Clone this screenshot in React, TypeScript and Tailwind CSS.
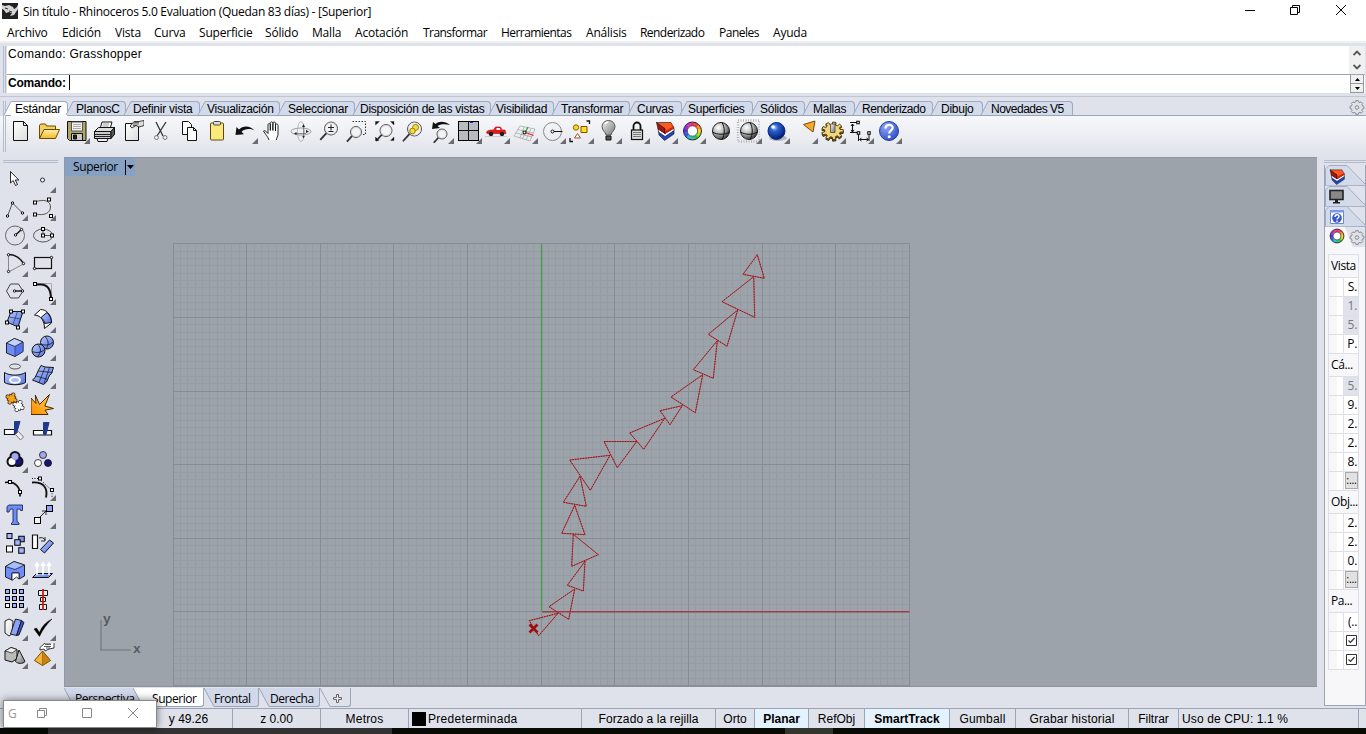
import React from "react";

type P = { children?: React.ReactNode };
const K = "#111";

/* ---------- icon helpers ---------- */
const Ico = ({ children }: P) => (
  <svg width="24" height="24" viewBox="0 0 24 24" fill="none" stroke={K} strokeWidth="1" className="block shrink-0">
    {children}
  </svg>
);
const Sq = ({ x, y, s = 3, f = "#fff" }: { x: number; y: number; s?: number; f?: string }) => (
  <rect x={x - s / 2} y={y - s / 2} width={s} height={s} fill={f} stroke="#000" />
);
const Corner = () => (
  <svg width="6" height="6" viewBox="0 0 6 6" className="absolute bottom-0 right-0 block">
    <path d="M6 0v6H0z" fill="#6b6b70" />
  </svg>
);

const Defs = () => (
  <svg width="0" height="0" className="absolute">
    <defs>
      <linearGradient id="fold" x1="0" y1="0" x2="0" y2="1"><stop offset="0" stopColor="#fff2a8" /><stop offset="1" stopColor="#f2b82c" /></linearGradient>
      <linearGradient id="page" x1="0" y1="0" x2="1" y2="1"><stop offset="0" stopColor="#fff" /><stop offset="1" stopColor="#dcdcdc" /></linearGradient>
      <linearGradient id="blue" x1="0" y1="0" x2="1" y2="1"><stop offset="0" stopColor="#b9c8ff" /><stop offset="1" stopColor="#4f73e6" /></linearGradient>
      <linearGradient id="org" x1="0" y1="1" x2="1" y2="0"><stop offset="0" stopColor="#ff8a00" /><stop offset="1" stopColor="#ffd84a" /></linearGradient>
      <linearGradient id="gray" x1="0" y1="0" x2="1" y2="1"><stop offset="0" stopColor="#f2f2f2" /><stop offset="1" stopColor="#777" /></linearGradient>
      <radialGradient id="ballg" cx=".35" cy=".3" r=".75"><stop offset="0" stopColor="#fff" /><stop offset=".5" stopColor="#b5b5b5" /><stop offset="1" stopColor="#333" /></radialGradient>
      <radialGradient id="ballb" cx=".38" cy=".3" r=".7"><stop offset="0" stopColor="#b8d4ff" /><stop offset=".3" stopColor="#2b63d8" /><stop offset="1" stopColor="#041a6b" /></radialGradient>
      <radialGradient id="ballh" cx=".35" cy=".3" r=".8"><stop offset="0" stopColor="#8ea8f5" /><stop offset="1" stopColor="#2846c4" /></radialGradient>
    </defs>
  </svg>
);

const wheelColors = ["#ff3b30", "#ff8a1e", "#ffd91a", "#9be01e", "#2fc43a", "#1fc9a8", "#2ab4f0", "#2a5cf0", "#5a34e0", "#a02be0", "#e02bc0", "#f02b70"];
const Wheel = ({ cx = 12, cy = 12, r = 7 }: { cx?: number; cy?: number; r?: number }) => (
  <g>
    {wheelColors.map((c, i) => {
      const a = ((i * 30 - 75) * Math.PI) / 180;
      const b = ((i * 30 - 43) * Math.PI) / 180;
      return <path key={c} d={`M${cx + r * Math.cos(a)} ${cy + r * Math.sin(a)}A${r} ${r} 0 0 1 ${cx + r * Math.cos(b)} ${cy + r * Math.sin(b)}`} stroke={c} strokeWidth={r * 0.5} />;
    })}
    <circle cx={cx} cy={cy} r={r * 1.28} stroke="#222" strokeWidth="1" />
    <circle cx={cx} cy={cy} r={r * 0.74} stroke="#333" strokeWidth=".8" fill="#fff" />
  </g>
);
const cogPath = (cx: number, cy: number, rx: number, ry: number, inner: number, teeth: number) => {
  const pts: string[] = [];
  for (let i = 0; i < teeth; i++) {
    [[-0.3, inner], [-0.22, 1], [0.22, 1], [0.3, inner]].forEach(([o, k]) => {
      const a = ((i + o) / teeth) * Math.PI * 2;
      pts.push(`${(cx + rx * k * Math.cos(a)).toFixed(2)} ${(cy + ry * k * Math.sin(a)).toFixed(2)}`);
    });
  }
  return `M${pts.join("L")}Z`;
};
const Layers = () => (
  <g strokeWidth=".6">
    <path d="M5.500 12l6.500 5 9-6v4l-9.500 6.500L6 16z" fill="#2346c0" />
    <path d="M5 9.500l7 5 9-5.500v2.500L12 17.500l-6.500-4.500z" fill="#fff" />
    <path d="M3.500 3.500L12 9.500v5L5 10z" fill="#a8120a" />
    <path d="M3.500 3.500L18 3.500l3 5.500-9 5.500v-5z" fill="#ff5a1e" />
    <path d="M12 12l9-5v2l-9 5.500z" fill="#d9200c" stroke="none" />
  </g>
);
const Lens = ({ cx = 14, cy = 10, r = 6.5, f = "#f4f4f6" }: { cx?: number; cy?: number; r?: number; f?: string }) => (
  <g>
    <path d={`M${cx - r * 0.7} ${cy + r * 0.7}L${cx - r * 1.65} ${cy + r * 1.75}`} stroke="#333" strokeWidth="1.800" />
    <circle cx={cx} cy={cy} r={r} fill={f} stroke="#555" />
    <circle cx={cx} cy={cy} r={r - 1} stroke="#ccc" strokeWidth=".6" />
  </g>
);
const Sphere = () => (
  <g>
    <circle cx="12" cy="12" r="8.500" fill="url(#ballg)" stroke="#222" />
    <path d="M3.500 13c5 3 12 3 17 0M13 3.500c3 5 3 12 0 17" stroke="#111" />
  </g>
);
const Puzzle = ({ x, y, f }: { x: number; y: number; f: string }) => {
  const body = (
    <>
      <rect x="-3" y="-3" width="6" height="6" />
      <circle cx="0" cy="-4.200" r="1.500" /><circle cx="0" cy="4.200" r="1.500" />
      <circle cx="-4.200" cy="0" r="1.500" /><circle cx="4.200" cy="0" r="1.500" />
    </>
  );
  return (
    <g transform={`translate(${x} ${y}) rotate(25)`}>
      <g stroke="#222" strokeWidth="1.400">{body}</g>
      <g fill={f} stroke="none">{body}</g>
    </g>
  );
};

/* ---------- main toolbar ---------- */
const topIcons: [React.ReactNode, boolean][] = [
  [<path d="M5.500 2.500h10l4 4v15h-14zM15.500 2.500v4h4" fill="url(#page)" />, false],
  [<><path d="M3.500 19.500V6.500l1-1.500h5l1 2h9v3" fill="#f5d060" stroke="#6b4a00" /><path d="M3.500 19.500l4.500-9h15.500l-4 9z" fill="url(#fold)" stroke="#6b4a00" /></>, false],
  [<><path d="M3.500 2.500h18.500v19H5.500l-2-2z" fill="#b0a765" /><path d="M7.500 3h11v9h-11z" fill="#f2f2f0" stroke="#555" /><path d="M9 5.500h8M9 7.500h8M9 9.500h8" stroke="#aaa" /><path d="M7.500 14.500h11v7h-11z" fill="#ccc" /><path d="M9.500 16h3v4h-3z" fill="#222" /></>, true],
  [<><path d="M8 10l2-7h10l-2 7z" fill="#fff" /><path d="M11 5h6M10.500 7h6" stroke="#999" /><path d="M2.500 12.500l4-4h16l-3.500 4z" fill="#ddd" /><path d="M2.500 12.500H19v7H2.500z" fill="#ccc" /><path d="M19 12.500l3.500-4v7L19 19.500z" fill="#555" /><path d="M3 15.500h15.500M3 17.500h15.500" stroke="#222" /><path d="M5 19.500h11l-1 3H6z" fill="#eee" /></>, false],
  [<><path d="M5.500 4.500h13v17h-13z" fill="url(#page)" /><path d="M10 7l4-4.500h5l5-1v5l-5 1.500-3-1.500-4 2.500z" fill="#ddd" strokeWidth=".8" /><path d="M13 5h6M14 3.500h5M13 6.500h4" stroke="#333" strokeWidth=".7" /></>, false],
  [<><path d="M8 3l7 14M18 3L9 17" strokeWidth="1.300" stroke="#333" /><circle cx="8.500" cy="18.500" r="2" stroke="#777" /><circle cx="17" cy="18.500" r="2" stroke="#777" /></>, false],
  [<><path d="M6.500 2.500h6l3 3v10h-9z" fill="#fff" /><path d="M11.500 8.500h6l3 3v10h-9z" fill="#fff" /><path d="M17.500 8.500v3h3" /></>, false],
  [<><rect x="6.500" y="4" width="13" height="17" rx="1" fill="#fbe97b" stroke="#5b4a10" /><rect x="9.500" y="2.500" width="7" height="3.500" rx="1" fill="#ddd" stroke="#444" /></>, false],
  [<path d="M3.500 16l1-8 2.500 2.500C11 6.500 18 6.500 22.500 11.500 17.500 9 12.500 10 9.500 12.800l2.500 2.400z" fill="#111" stroke="none" />, true],
  [<path d="M9 21C8 17.500 5 15 3.500 12c1-1 2.800.3 4.500 2.500V6c0-2 2.300-2 2.300 0v5.500V4.500c0-2.200 2.600-2.200 2.600 0v7V4.500c0-2 2.600-2 2.600 0V12 6.500c0-2 2.500-2 2.500 0V15c0 2.500-1.500 3.500-1.700 6" fill="#fff" strokeWidth=".9" />, false],
  [<><ellipse cx="13" cy="12.500" rx="10" ry="3.500" stroke="#888" strokeWidth=".8" /><ellipse cx="13" cy="12.500" rx="3.500" ry="10" stroke="#aaa" strokeWidth=".8" /><path d="M15.500 6v11M7 14.500h11" stroke="#666" strokeWidth=".7" /><path d="M14 8l1.500-3L17 8zM14.300 17l1.200 2.500 1.200-2.500zM8.500 13L6 14.500 8.500 16zM18 11l3 1.500-3 1.500z" fill="#222" stroke="none" /></>, false],
  [<><Lens cx={15} cy={9.500} /><path d="M12 8.500h6M15 5.500v6M12.500 12.500h5" stroke="#222" /></>, false],
  [<><path d="M8.500 2.500h13v13h-4" stroke="#333" strokeDasharray="1.500 1.500" /><Lens cx={12} cy={13} r={5.5} /></>, false],
  [<><Lens cx={14} cy={11.500} r={6} /><path d="M3.500 6V2.500h4zM18.500 2.500H22v3.500zM22 18v3.500h-3.500zM3.500 18v3.500h3.500z" fill="#111" strokeWidth=".3" /></>, false],
  [<><Lens cx={14.500} cy={10} r={7} /><circle cx="15.500" cy="8.500" r="3" fill="#f6df3b" stroke="#9a7d00" /><circle cx="12.500" cy="12" r="2.800" fill="#f6df3b" stroke="#9a7d00" /></>, false],
  [<><Lens cx={14} cy={15} r={5} /><path d="M4 10l1-7 2.500 2C11 2 17 2 22 6 17 4.500 12 5 9.500 7l2.500 2z" fill="#111" stroke="none" /></>, true],
  [<><rect x="2.500" y="2.500" width="20" height="19" fill="#b9bbbf" stroke="#000" /><path d="M12.500 2.500v19M2.500 11.500h20" /><path d="M14 3.500h3" stroke="#22f" /></>, true],
  [<><path d="M2.500 13c1-2 5-2 7-2l2-3h5l1.500 3h3l1 3.500H3z" fill="#e51b1b" stroke="#b01010" strokeWidth=".6" /><path d="M12.500 9v2h4l-1-2z" fill="#fff" stroke="none" /><circle cx="7" cy="15" r="1.800" fill="#222" /><circle cx="18" cy="15" r="1.800" fill="#222" /><path d="M1 17.500h22" stroke="#ccc" /></>, true],
  [<g strokeWidth=".8"><path d="M8 7l15 3-5 12-16-5zM5.500 10.500l16 3.500M4 14l16 4M12 8L8 19M15.500 8.500l-5 11.500M19 9.500L14 21" stroke="#aaa" /><path d="M13.500 13.500l8 3" stroke="#e22" strokeWidth="1.300" /><path d="M13.500 13l2.500-5" stroke="#3a3" strokeWidth="1.300" /><Sq x={12.500} y={13.500} s={2.600} /></g>, true],
  [<><circle cx="12.500" cy="12.500" r="9" stroke="#888" /><path d="M12.500 12.500h10" /><circle cx="12.500" cy="12.500" r="1.500" fill="#fff" /></>, true],
  [<><path d="M18.500 2h3v3M2 19v3.500h3" strokeWidth="1.300" /><circle cx="8" cy="8.500" r="2.700" fill="#ffd21e" stroke="#8a6a00" /><path d="M13 7.500h6v6h-6z" fill="#ffe01e" stroke="#8a4a00" /><path d="M9.500 14.500l3 4.500h-6z" fill="#fff" stroke="#a0522d" /></>, true],
  [<><path d="M10 16c0-3-4-4-4-8.500a6.500 6 0 0 1 13 0C19 12 15 13 15 16z" fill="url(#gray)" stroke="#555" /><path d="M10 17h5v4h-5z" fill="#555" /><path d="M9 5c1-1.500 2-2 3-2" stroke="#fff" strokeWidth="1.500" /></>, true],
  [<><path d="M9.500 11V7a3.500 3.500 0 0 1 7 0v4" strokeWidth="1.800" /><rect x="7.500" y="11" width="11" height="9.500" fill="#ddd" strokeWidth="1.200" /><path d="M9 13.500h8M9 15.500h8M9 17.500h8" stroke="#777" /></>, true],
  [<g transform="translate(1 0)"><Layers /></g>, true],
  [<Wheel cx={12.500} />, true],
  [<g transform="translate(1 0)"><Sphere /></g>, false],
  [<><rect x="2" y="1.500" width="21.500" height="21" stroke="#b5b5b5" strokeDasharray="1 1.500" strokeWidth="2.500" /><g transform="translate(1 0)"><Sphere /></g></>, true],
  [<><ellipse cx="14" cy="19" rx="9" ry="3" fill="#b5b8c0" stroke="none" /><circle cx="12.500" cy="12" r="8.500" fill="url(#ballb)" stroke="#0a2a80" /><circle cx="9" cy="8" r="1.800" fill="#fff" stroke="none" /></>, true],
  [<><path d="M1 22L14 4l6 8z" fill="#eeeef0" stroke="none" /><path d="M11.500 5.500L23 2l-2 11z" fill="#f7a928" stroke="#7a4a10" /></>, true],
  [<><path d={cogPath(12.5, 13, 10.8, 9.2, 0.72, 9)} fill="#8a6a1c" stroke="#2a1e04" strokeWidth=".9" /><path d={cogPath(12.5, 11.800, 10.8, 8.800, 0.72, 9)} fill="#f2d57c" stroke="#4a3408" strokeWidth=".9" /><path d="M10.500 5h4.500v8.500h-4.500z" fill="url(#gray)" stroke="#444" strokeWidth=".8" /></>, true],
  [<><path d="M2 3.500h8M4.500 5v8M2 13.500h8" strokeWidth="1.100" /><path d="M3 7l1.500-2L6 7M3 11l1.500 2L6 11M12 20.500h8M13.500 19l-2 1.500 2 1.500M18.500 19l2 1.500-2 1.500M10.500 14v8M21 14v8" /><Sq x={10} y={3.500} s={2.500} /><Sq x={10.500} y={14} s={2.500} /><Sq x={21} y={14} s={2.500} /></>, true],
  [<><circle cx="13" cy="12" r="9.500" fill="url(#ballh)" stroke="#2a3f9a" /><path d="M9.500 9.500c0-5 7.500-4.500 7.200-.6-.2 2.600-3.500 2.600-3.500 5.600" stroke="#fff" strokeWidth="2.200" /><circle cx="13.200" cy="17.800" r="1.500" fill="#fff" stroke="none" /></>, true],
];

/* ---------- side toolbar ---------- */
const Tile = ({ d }: { d: string }) => <path d={d} fill="url(#blue)" />;
const sideIcons: [React.ReactNode, boolean][] = [
  [<path d="M7.500 4.500v11.500l2.700-2.500 2.300 5 2-1-2.200-4.500h3.500z" fill="#fff" strokeWidth=".9" />, false],
  [<circle cx="11.500" cy="13" r="2" fill="#fff" stroke="#222" />, true],
  [<><path d="M4.500 21L9.500 8l10 10" stroke="#555" /><circle cx="4.500" cy="21" r="1.200" fill="#fff" stroke="#000" /><circle cx="9.500" cy="8" r="1.200" fill="#fff" stroke="#000" /><circle cx="19.500" cy="18" r="1.200" fill="#fff" stroke="#000" /></>, true],
  [<><path d="M4 7c9-3.500 15.500-1 15.500 5s-6 9-15.500 7" stroke="#555" /><Sq x={4} y={7.500} /><Sq x={18} y={4.500} /><Sq x={4} y={19.500} /><Sq x={20} y={21} /></>, true],
  [<><circle cx="12" cy="12.500" r="9.500" stroke="#666" /><path d="M12.500 12L18.500 6.500" strokeWidth="1.400" /><circle cx="12.500" cy="12" r="1.200" fill="#fff" /><circle cx="18.500" cy="6.500" r="1.200" fill="#fff" /></>, true],
  [<><ellipse cx="12" cy="12.500" rx="9.500" ry="6.500" stroke="#555" /><path d="M12 6v6.500h9" stroke="#555" /><Sq x={12} y={6} /><Sq x={12} y={12.500} /><Sq x={21} y={12.500} /></>, true],
  [<><path d="M5.500 4v17l15-8" stroke="#888" /><path d="M5.500 3.500c7 0 12 4 15 9" strokeWidth="1.300" /><circle cx="5.500" cy="3.800" r="1.200" fill="#fff" /><circle cx="20.500" cy="12.500" r="1.200" fill="#fff" /><circle cx="5.500" cy="20.500" r="1.200" fill="#fff" /></>, true],
  [<><rect x="3.500" y="6.500" width="17" height="11" strokeWidth="1.200" /><circle cx="20.500" cy="6.500" r="1.200" fill="#fff" /><circle cx="3.500" cy="17.500" r="1.200" fill="#fff" /></>, true],
  [<><path d="M3.500 12l4-7h8l4.500 7-4.500 7h-8z" stroke="#444" /><path d="M12 12h7.500" strokeWidth="1.400" /><circle cx="11.500" cy="12" r="1.200" fill="#fff" /><circle cx="19.500" cy="12" r="1.200" fill="#fff" /></>, true],
  [<><path d="M4 4.500h16.500v16" stroke="#aaa" /><path d="M4 5.500h6c7 0 10 5 10 15" strokeWidth="1.900" /><Sq x={4} y={5} /><Sq x={20} y={20} /></>, true],
  [<><Tile d="M8 4.500h12L15 20 4 15z" /><path d="M14.500 4.500L10 17.500M6 10l11.500 2" stroke="#345" strokeWidth=".8" /><Sq x={8} y={4.500} /><Sq x={20} y={4.500} /><Sq x={4} y={15.500} /><Sq x={15} y={20.500} /></>, true],
  [<><path d="M3.500 8l6-5.500c6 0 11 5 11 13.500l-7 5.500c0-7-3-13-10-13.500z" fill="#fff" /><Tile d="M10 10.500l6-5c3 3 4.500 7 4.500 10l-7 1c0-2-1-4-3.500-6z" /></>, true],
  [<><path d="M3.500 8l8-4.500L20 7v9.500l-8 5L3.500 18z" fill="#6f8df8" strokeWidth=".9" /><path d="M3.500 8l8-4.500L20 7l-8 4.500z" fill="#c5d2ff" strokeWidth=".7" /><path d="M12 11.500v10l8-5V7z" fill="#5374ea" stroke="#234" strokeWidth=".6" /></>, true],
  [<><circle cx="16" cy="7.500" r="6.500" fill="url(#blue)" /><path d="M10 9c4 2 9 1 12-2M14 1.500c4 4 4 8 1 12.500" strokeWidth=".8" /><circle cx="7.500" cy="15.500" r="6.500" fill="url(#blue)" /><path d="M1.500 16.500c4 2 9 1 12-2M6.500 9c4 4 4 8 0 12.500" strokeWidth=".8" /></>, true],
  [<><ellipse cx="12" cy="3.500" rx="5.500" ry="2.500" stroke="#555" /><path d="M1.500 9.500c5 3.500 16 3.500 21 0v10c-5 3-16 3-21 0z" fill="url(#blue)" /><ellipse cx="12" cy="17" rx="6" ry="3.800" fill="#fff" stroke="none" /><ellipse cx="12" cy="17" rx="4" ry="2" fill="#aebfff" stroke="none" /></>, true],
  [<><Tile d="M10 2.500l4 1.500 8.500.5-2 6c-3 2-3 5-5 8.500l-3 2.500L1.500 17c3.500-2 5-9 8.500-14.500z" /><path d="M7.500 8l14 1.500M5 13l12 3.500M14 4.500L8 19.500M18.500 4.500l-5.500 16" strokeWidth=".7" /></>, true],
  [<><Puzzle x={8.500} y={7.500} f="#f9a11b" /><Puzzle x={15.500} y={15} f="#fff" /></>, false],
  [<path d="M0 7l5 5.500-.7-8.500 4.200 9.500L18.500 3.500 13.800 15l8.700 2.500-8.500 1.700 3 4.300H0z" fill="url(#org)" stroke="#4a2a00" />, false],
  [<><path d="M1.500 10.500h10v5h-10z" fill="#fff" strokeWidth="1.200" /><path d="M11.500 2.500h5.500l-3.500 12h-2z" fill="#1d3a8f" stroke="#1d3a8f" /><path d="M12.500 15.500l3-3 5 5.500-3 3z" stroke="#777" fill="#eee" /></>, false],
  [<><path d="M2.500 11.500h18v4.500h-18z" fill="#fff" strokeWidth="1.200" /><path d="M12.500 3.500h5.500l-3 12h-2.500z" fill="#1d3a8f" stroke="#1d3a8f" /></>, false],
  [<g transform="translate(0 .5)"><g strokeWidth="4"><circle cx="12" cy="9" r="3.500" /><circle cx="9" cy="14" r="3.500" /><circle cx="15" cy="14" r="3.500" /></g><circle cx="15" cy="14" r="3.500" fill="#15157c" stroke="none" /><circle cx="9" cy="14" r="3.500" fill="#fff" stroke="none" /><circle cx="12" cy="9" r="3.500" fill="#a4a6ef" stroke="none" /></g>, true],
  [<><circle cx="12" cy="8" r="3.500" fill="#a4a6ef" strokeWidth=".8" /><circle cx="7" cy="16" r="3.500" fill="#fff" strokeWidth=".8" /><circle cx="17" cy="16" r="3.500" fill="#15157c" strokeWidth=".8" /></>, false],
  [<><path d="M2 7.500c10-2 16 5 15 14" strokeWidth="1.700" /><Sq x={7} y={7} /><Sq x={17} y={17} /></>, false],
  [<><path d="M1 7.500c12-1 16 6 14 15" strokeWidth="1.900" /><path d="M1 3.500h7l13 12v7" strokeDasharray="1 1.500" /><Sq x={9} y={3.500} /><Sq x={21} y={15} /></>, true],
  [<path d="M4 3.500L6 2h13.500v5.500h-2L17 6h-3v12.500l2 1.500v1.500H8.500V20l1.500-1V6H7.500L6 9H4z" fill="#6f8df8" stroke="#1b2a5a" strokeWidth=".9" />, false],
  [<><path d="M8 15l7-7M11 8h4v4" strokeWidth=".9" /><Sq x={18.500} y={5.500} s={6} f="#8fa4f5" /><Sq x={6.500} y={17.500} s={6} f="#f2f2f2" /></>, true],
  [<><Sq x={6.500} y={5} s={5} f="#a4b6fa" /><Sq x={18.500} y={8} s={5.500} f="#7d97f0" /><Sq x={14.500} y={11.500} s={5.500} f="#a4b6fa" /><Sq x={6.500} y={18} s={6} f="#fff" /><Sq x={18.500} y={19.500} s={5.500} f="#a4b6fa" /></>, false],
  [<><path d="M1.500 4h5v13.500h-5z" fill="#fff" strokeWidth="1.200" /><path d="M8 7c3-1 5 0 6 2m0-3v4h-4" strokeWidth=".9" /><path d="M9.500 18.500l9-9.500 4 3-9 10z" fill="url(#blue)" /></>, false],
  [<><path d="M2.500 7.500l8.500-5L21.500 6v11L16 20v-6H9v7l-6.500-3z" fill="#6f8df8" strokeWidth=".9" /><path d="M2.500 7.500l8.500-5L21.500 6 12 10.500z" fill="#a9bbff" strokeWidth=".7" /><path d="M9 21.500V14h7v6l-2.500-2z" fill="#fff" strokeWidth=".8" /></>, true],
  [<><path d="M1.500 18.500h16l4-4h-16z" fill="url(#blue)" /><path d="M6 16V5M12 16V5M18 16V5M4 7l2-3 2 3M10 7l2-3 2 3M16 7l2-3 2 3" stroke="#fff" strokeWidth="1.600" /></>, true],
  [<>{[4.500, 11.500, 18.500].flatMap((y) => [4.500, 11.500, 18.500].map((x) => <Sq key={`${x}-${y}`} x={x} y={y} s={4} f={x === 4.500 && y === 18.500 ? "#fff" : "#9db0f8"} />))}</>, true],
  [<><path d="M7.500 3.500h9v5h-9zM9.500 10.500h5v4h-5zM8.500 17.500h7v5h-7z" fill="#eee" /><path d="M12 2v21" stroke="#d01818" strokeWidth="1.800" /></>, true],
  [<><path d="M2 6l4-2 4 2-1 13-3 2-4-3z" fill="url(#page)" strokeWidth=".9" /><path d="M12.500 4l6 1.500-5 15-6-1.500z" fill="#8aa2f7" strokeWidth=".9" /><path d="M18.500 5.500L21 7.500l-5 12.500-2.500.5z" fill="#3957c9" strokeWidth=".9" /></>, true],
  [<path d="M3 14l2.500-1 3 4.500C11 11 15 7 21 4 16 9 12 14 8.500 21.500z" fill="#000" strokeWidth=".5" />, true],
  [<><path d="M2 8l6-3.500 6 2v9L9 19l-7-2z" fill="#bbb" /><path d="M2 8l6-3.500 6 2L9 10z" fill="#eee" strokeWidth=".7" /><path d="M16 7l6 11.500c-2 2.500-7 2.500-9.500 0z" fill="url(#gray)" /></>, true],
  [<><path d="M3.500 17.500l8-9.500 8 9.500-8 5z" fill="#f6b43a" stroke="#7a4a00" /><path d="M11.500 8v14.500l8-5z" fill="#c98313" stroke="#7a4a00" strokeWidth=".5" /><path d="M9 4.500L14 0h5l4-1v6l-5 1-4 2-1-2-4 1z" fill="#fff" strokeWidth=".8" /><path d="M14 1.500h6M13 3.500h7M15 5h4" strokeWidth=".7" /></>, true],
];

/* ---------- title / menu ---------- */
const menu: [string, string][] = [
  ["Archivo", "w-[55px]"], ["Edición", "w-[53px]"], ["Vista", "w-[39px]"], ["Curva", "w-[45px]"], ["Superficie", "w-[66px]"],
  ["Sólido", "w-[47px]"], ["Malla", "w-[43px]"], ["Acotación", "w-[68px]"], ["Transformar", "w-[78px] tracking-[-0.55px]"], ["Herramientas", "w-[85px] tracking-[-0.55px]"],
  ["Análisis", "w-[54px]"], ["Renderizado", "w-[79px] tracking-[-0.55px]"], ["Paneles", "w-[54px] tracking-[-0.5px]"], ["Ayuda", "w-[50px]"],
];

const Header = () => (
  <header className="h-[46px] shrink-0 bg-white font-['Open_Sans','Noto_Sans',sans-serif] text-[12px] text-black">
    <div className="flex h-[23px] items-center">
      <svg width="16" height="16" viewBox="0 0 16 16" className="mb-[2px] ml-[2px] mr-[5px]">
        <path d="M0 0h16v16H0z" fill="#222" />
        <path d="M0 2l3 1 4-1 4 2 1 2 2-1 2-3v4l-4 6-4 1 2-3-3-1-3 1-2-3-2-1z" fill="#d5d5d5" />
        <path d="M3 5l3 1M7 8l3 1" stroke="#333" />
      </svg>
      <span className="whitespace-nowrap tracking-[-0.28px]">Sin título - Rhinoceros 5.0 Evaluation (Quedan 83 días) - [Superior]</span>
      <svg width="110" height="12" viewBox="0 0 110 12" className="mb-[3px] ml-auto mr-[16px]" fill="none" stroke="#000">
        <path d="M5 6.500h10M50.500 3.500h7v7h-7zM52.500 3.500v-2h7v7h-2" />
        <path d="M96 1l10 10M106 1l-10 10" />
      </svg>
    </div>
    <nav className="flex h-[18px] items-center pl-[7px] pt-[2px] tracking-[-0.2px]">
      {menu.map(([t, w]) => <span key={t} className={`${w} whitespace-nowrap`}>{t}</span>)}
    </nav>
    <div className="h-[2px] bg-[#f0f0f0]" />
    <div className="h-[3px] bg-[#dfe2ea]" />
  </header>
);

const Grip = () => <div className="w-[3px] shrink-0 border-x border-[#b3bccb]" />;

const CommandArea = () => (
  <section className="flex h-[51px] shrink-0 border-b border-[#c0c6d2] pb-[3px] pl-[3px] text-[12px]">
    <Grip />
    <div className="ml-px mr-px flex min-w-0 flex-1 flex-col bg-white">
      <div className="flex h-[29px] border-b border-[#9aa5b5]">
        <p className="flex-1 pl-px pt-[1px] leading-[15px] tracking-[0.3px]">Comando: Grasshopper</p>
        <div className="flex w-[16px] flex-col items-center justify-between bg-[#f0f0f0] pb-[4px] pt-[4px]">
          <svg width="8" height="6" viewBox="0 0 8 6"><path d="M.5 5L4 1.500 7.500 5" fill="none" stroke="#555" strokeWidth="1.900" /></svg>
          <svg width="8" height="6" viewBox="0 0 8 6"><path d="M.5 1L4 4.500 7.500 1" fill="none" stroke="#555" strokeWidth="1.900" /></svg>
        </div>
      </div>
      <div className="flex flex-1 items-start">
        <b className="w-[62px] whitespace-nowrap pl-px leading-[17px] tracking-[-0.2px]">Comando:</b>
        <span className="h-[15px] w-px bg-black" />
        <div className="ml-auto mr-px flex flex-col">
          <div className="grid h-[9px] w-[14px] place-items-center border border-t-0 border-[#999] bg-[#f0f0f0]"><svg width="5" height="3" viewBox="0 0 5 3"><path d="M0 3h5L2.500 0z" /></svg></div>
          <div className="grid h-[9px] w-[14px] place-items-center border border-t-0 border-[#999] bg-[#f0f0f0]"><svg width="5" height="3" viewBox="0 0 5 3"><path d="M0 0h5L2.500 3z" /></svg></div>
        </div>
      </div>
    </div>
  </section>
);

const tabs: [string, string][] = [
  ["Estándar", "w-[62px] pl-[9px]"], ["PlanosC", "w-[58px] pl-[8px]"], ["Definir vista", "w-[74px] pl-[7px]"], ["Visualización", "w-[80px] pl-[7px]"],
  ["Seleccionar", "w-[75px] pl-[8px]"], ["Disposición de las vistas", "w-[136px] pl-[5px]"], ["Visibilidad", "w-[63px] pl-[5px]"], ["Transformar", "w-[76px] pl-[7px]"],
  ["Curvas", "w-[52px] pl-[7px]"], ["Superficies", "w-[71px] pl-[6px]"], ["Sólidos", "w-[52px] pl-[7px]"], ["Mallas", "w-[50px] pl-[8px]"],
  ["Renderizado", "w-[78px] pl-[7px] tracking-[-0.4px]"], ["Dibujo", "w-[50px] pl-[8px]"], ["Novedades V5", "w-[90px] pl-[8px] tracking-[-0.5px]"],
];

const GearRing = () => (
  <svg width="16" height="16" viewBox="0 0 16 16" fill="none" stroke="#8c8c8c" className="block">
    <path d={cogPath(8, 7.5, 7, 7, 0.82, 8)} />
    <circle cx="8" cy="7.500" r="1.800" />
  </svg>
);

const Tabs = () => (
  <div className="flex h-[19px] shrink-0 items-stretch pl-[3px] pt-[4px]">
    <Grip />
    <div className="flex flex-1 border-b border-[#9aa5b5] text-[12px] tracking-[-0.25px]">
      {tabs.map(([t, cls], i) => (
        <div key={t} className={`${cls} relative flex shrink-0 items-center whitespace-nowrap`}>
          <div className={`absolute inset-y-0 left-[5px] right-0 rounded-tr-[4px] border-r border-t border-[#9aa9c4] ${i ? "bg-[#d3daea]" : "-bottom-px bg-white"}`} />
          <svg width="10" height="14" viewBox="0 0 10 14" className="absolute -left-[3px] top-0">
            <path d="M1 14L8 .5h2V14z" fill={i ? "#d3daea" : "#fff"} />
            <path d="M1 14L8 .5h2" fill="none" stroke="#9aa9c4" />
          </svg>
          <span className="relative pt-[2px]">{t}</span>
        </div>
      ))}
      <div className="-mt-[1px] ml-auto mr-px"><GearRing /></div>
    </div>
  </div>
);

const MainToolbar = () => (
  <div className="flex h-[41px] shrink-0 bg-gradient-to-b from-[#f7f8fa] to-[#dfe2ea] pl-[3px]">
    <div className="flex h-[36px]"><Grip /></div>
    <div className="flex h-[27px]">
      {topIcons.map(([ic, c], i) => (
        <div key={i} className="relative flex h-[28px] w-[28px] items-center justify-center pt-[2px]">
          <Ico>{ic}</Ico>
          {c && <Corner />}
        </div>
      ))}
    </div>
  </div>
);

const SideToolbar = () => (
  <aside className="w-[64px] shrink-0 pt-[3px]">
    <div className="ml-[3px] h-[3px] w-[55px] border-y border-[#b3bccb]" />
    <div className="mt-[2px] grid w-[56px] grid-cols-2">
      {sideIcons.map(([ic, c], i) => (
        <div key={i} className="relative flex h-[28px] w-[28px] items-center justify-center pl-[2px]">
          <Ico>{ic}</Ico>
          {c && <Corner />}
        </div>
      ))}
    </div>
  </aside>
);

/* ---------- viewport ---------- */
const triangles = [
  [757.3, 254.7, 743, 274.3, 764.3, 278.3], [753.7, 276.7, 722, 301.7, 754.7, 317.3], [737.7, 310, 708.3, 334.3, 727, 346.3],
  [717.3, 340.7, 693.3, 369.7, 713.3, 378.3], [702.7, 374.7, 671, 397, 695.3, 412.7], [682.3, 405.7, 660, 410.7, 670, 424.7],
  [664.7, 418.3, 629.7, 433, 643.7, 449.3], [636.7, 441.5, 604, 441.5, 617.3, 467.7], [610, 455.3, 569.7, 460, 590.3, 490.3],
  [580, 476.3, 563.3, 502.3, 586.3, 506.3], [574.7, 505.3, 561.7, 533.3, 585, 534.7], [573.3, 534.3, 598.3, 554.7, 571.7, 566.3],
  [585, 561.3, 567.3, 585.3, 583.3, 591], [574.7, 589, 549, 606.7, 568.7, 619.3], [558, 613.3, 529.3, 620.7, 538.7, 635.7],
];
const range = (n: number) => Array.from({ length: n }, (_, i) => i);

const Viewport = () => (
  <main className="relative h-[530px] w-[1253px] bg-[#9da3aa]">
    <svg width="1253" height="530" viewBox="64 157 1253 530" className="block" fill="none">
      <g stroke="#969ca4" shapeRendering="crispEdges">
        {range(101).map((i) => <path key={`v${i}`} d={`M${173 + i * 7.365} 243V686`} />)}
        {range(61).map((i) => <path key={`h${i}`} d={`M173 ${243.7 + i * 7.365}H909.500`} />)}
      </g>
      <g stroke="#878c95" shapeRendering="crispEdges">
        {range(11).map((i) => <path key={`V${i}`} d={`M${173 + i * 73.65} 243V686`} />)}
        {range(7).map((i) => <path key={`H${i}`} d={`M173 ${243.7 + i * 73.65}H909.500`} />)}
      </g>
      <path d="M541.600 244V611" stroke="#4f9a55" strokeWidth="1.500" />
      <path d="M542 611.700H909.500" stroke="#9b3f43" strokeWidth="1.500" />
      {triangles.map((t, i) => {
        const d = `M${t[0]} ${t[1]}L${t[2]} ${t[3]}L${t[4]} ${t[5]}Z`;
        return (
          <g key={i}>
            <path d={d} stroke="#a8494e" strokeWidth=".9" />
            <path d={d} stroke="#9c0a0c" strokeDasharray="1.400 1.200" />
          </g>
        );
      })}
      <path d="M529.500 624.500l8 8M537.500 624.500l-8 8" stroke="#a00d10" strokeWidth="2.600" />
      <path d="M101 620V650M100 650H131" stroke="#7f848b" strokeWidth="1.600" />
      <g fill="#565b61" className="font-['Liberation_Mono',monospace] text-[13px] font-bold">
        <text x="103" y="623">y</text>
        <text x="133" y="652.500">x</text>
      </g>
      <path d="M64.500 687V157.500H1317" stroke="#8d98ab" />
      <path d="M64 686.500H1317" stroke="#8a92a0" />
    </svg>
    <div className="absolute left-px top-px flex h-[18px] w-[70px] items-center bg-[#86a1c1] pl-[8px] font-['Open_Sans',sans-serif] text-[12px]">
      <span className="w-[52px] tracking-[-0.4px]">Superior</span>
      <span className="h-[15px] w-px bg-black" />
      <svg width="7" height="4" viewBox="0 0 7 4" className="ml-px"><path d="M0 0h7L3.500 4z" /></svg>
    </div>
  </main>
);

const viewTabs: [string, string, boolean][] = [
  ["Perspectiva", "w-[69px] pl-[11px]", false], ["Superior", "w-[71px] pl-[19px]", true], ["Frontal", "w-[55px] pl-[10px]", false],
  ["Derecha", "w-[61px] pl-[11px]", false], ["+", "w-[31px] pl-[13px]", false],
];
const ViewTabs = () => (
  <div className="flex h-[21px] pt-px font-['Open_Sans',sans-serif] text-[12px]">
    {viewTabs.map(([t, cls, on]) => (
      <div key={t} className={`${cls} relative flex h-[19px] items-center whitespace-nowrap pt-[2px]`}>
        <svg width="12" height="19" viewBox="0 0 12 19" className="absolute left-0 top-0">
          <path d="M0 0h12v19h-2z" fill={on ? "#fff" : t === "+" ? "#dfe2ea" : "#d1d8e9"} />
          <path d="M0 0l10 18.500h2" fill="none" stroke="#9aa5b8" />
        </svg>
        <div className={`absolute inset-y-0 left-[11px] rounded-br-[3px] border-b border-[#9aa5b8] ${t === "Perspectiva" ? "-right-[10px]" : "right-0 border-r"} ${on ? "bg-white" : t === "+" ? "bg-[#dfe2ea]" : "bg-[#d1d8e9]"}`} />
        {t === "+" ? (
          <svg width="9" height="9" viewBox="0 0 9 9" className="relative" fill="#eee" stroke="#666"><path d="M3.500.5h2v3h3v2h-3v3h-2v-3h-3v-2h3z" /></svg>
        ) : (
          <span className="relative tracking-[-0.45px]">{t}</span>
        )}
      </div>
    ))}
  </div>
);

/* ---------- properties panel ---------- */
const rows: [string, string][] = [
  ["h", "Vista"], ["r", "S."], ["g", "1."], ["g", "5."], ["r", "P."],
  ["h", "Cá..."], ["g", "5."], ["r", "9."], ["r", "2."], ["r", "2."], ["r", "8."], ["b", ":..."],
  ["h", "Obj..."], ["r", "2."], ["r", "2."], ["r", "0."], ["b", ":..."],
  ["h", "Pa..."], ["r", "(.."], ["c", ""], ["c", ""],
];

const PanelTab = ({ children, on }: P & { on?: boolean }) => (
  <div className="relative flex h-[20.5px] items-center pl-[3px] pt-[2px]">
    <svg width="42" height="21" viewBox="0 0 42 21" className="absolute left-0 top-0" fill={on ? "#f7f7fa" : "#d3daea"} stroke={on ? "none" : "#a3adbf"}>
      <path d={on ? "M0 0h20l8 21H0z" : "M.5 21V4L4 .5h18L41.500 20.500z"} />
    </svg>
    <div className="relative">{children}</div>
  </div>
);

const RightPanel = () => (
  <aside className="ml-[7px] flex w-[42px] shrink-0 flex-col pt-[3px] font-['Open_Sans',sans-serif] text-[12px]">
    <div className="h-[3px] shrink-0 border-y border-[#b3bccb]" />
    <div className="mt-[2px] flex h-[541px] flex-col border-b border-l border-r border-[#9aa5b5] bg-[#f7f7fa]">
      <div className="h-[82px] bg-[#dfe2ea]">
        <PanelTab><svg width="18" height="18" viewBox="1 0 22 22" stroke={K}><Layers /></svg></PanelTab>
        <PanelTab><svg width="18" height="18" viewBox="0 0 18 18"><path d="M2 2.500h13v9H2z" fill="#888" stroke="#222" strokeWidth="1.600" /><path d="M7 12h3v2h2v1.500H5V14h2z" fill="#222" /></svg></PanelTab>
        <PanelTab><svg width="18" height="18" viewBox="0 0 18 18"><path d="M2.500 2.500h13v13h-13z" fill="#fff" stroke="#6a84d8" /><path d="M2 2h14v2.500H2z" fill="#7d96e8" /><circle cx="9" cy="10" r="4.800" fill="#3558d0" /><path d="M7 9c0-3 4-3 4-.5 0 1.500-2 1.500-2 3M9 12.500v1.500" stroke="#fff" fill="none" strokeWidth="1.400" /></svg></PanelTab>
        <PanelTab on>
          <div className="flex items-center gap-[3px]">
            <svg width="18" height="18" viewBox="3 2 20 20" fill="none" className="-mt-[3px]"><Wheel r={6} cx={13} /></svg>
            <GearRing />
          </div>
        </PanelTab>
      </div>
      <div className="ml-[3px] mt-[7px] w-[31px] border-l border-r border-t border-[#dcdfe8]">
        {rows.map(([k, t], i) =>
          k === "h" ? (
            <div key={i} className="flex h-[23px] items-center overflow-hidden whitespace-nowrap border-b border-[#dcdfe8] pl-[2px] tracking-[-0.4px]">{t}</div>
          ) : (
            <div key={i} className="flex h-[19px] border-b border-[#dcdfe8]">
              <div className="w-[8px]" />
              <div className="w-[7px] border-r border-[#dcdfe8] bg-white" />
              <div className={`flex flex-1 items-center justify-end overflow-hidden whitespace-nowrap tracking-[-0.3px] ${k === "g" ? "bg-[#dfe2ea] pr-[1px] text-[#777]" : k === "b" ? "bg-white" : "bg-white pr-[1px]"}`}>
                {k === "b" ? (
                  <span className="mb-px flex h-[17px] w-[13px] items-center justify-center border border-[#a9a9a9] bg-[#e1e1e1] text-[11px]">{t}</span>
                ) : k === "c" ? (
                  <svg width="11" height="11" viewBox="0 0 11 11" fill="#fff" stroke="#333" className="mb-[2px]"><path d="M.5.5h10v10H.5z" /><path d="M2.500 5.500l2 2 4-4.500" fill="none" strokeWidth="1.200" /></svg>
                ) : t}
              </div>
            </div>
          )
        )}
      </div>
    </div>
  </aside>
);

/* ---------- status bar ---------- */
const cells: [string, string][] = [
  ["", "w-[145px]"], ["y 49.26", "w-[88px] justify-center"], ["z 0.00", "w-[88px] justify-center"], ["Metros", "w-[88px] justify-center tracking-[0.2px]"],
  ["Predeterminada", "w-[173px] pl-[3px] tracking-[0.3px]"], ["Forzado a la rejilla", "w-[134px] justify-center tracking-[0.1px]"], ["Orto", "w-[39px] justify-center"],
  ["Planar", "w-[54px] justify-center bg-[#e3f2fd] font-bold"], ["RefObj", "w-[56px] justify-center"], ["SmartTrack", "w-[85px] justify-center bg-[#e3f2fd] font-bold"],
  ["Gumball", "w-[66px] justify-center tracking-[0.2px]"], ["Grabar historial", "w-[113px] justify-center tracking-[0.2px]"], ["Filtrar", "w-[50px] justify-center"], ["Uso de CPU: 1.1 %", "w-[180px] pl-[3px] tracking-[0.12px]"],
];
const StatusBar = () => (
  <footer className="flex h-[20px] shrink-0 border-t border-[#9aa5b5] text-[12px]">
    {cells.map(([t, cls]) => (
      <div key={t} className={`${cls} flex shrink-0 items-center whitespace-nowrap border-r border-[#9aa5b5]`}>
        {t === "Predeterminada" && <span className="mr-[2px] h-[14px] w-[14px] bg-black" />}
        {t}
      </div>
    ))}
  </footer>
);

const FloatingWindow = () => (
  <div className="absolute left-[3px] top-[700px] flex h-[28px] w-[154px] items-center border border-[#8a8a8a] bg-white shadow-[0_0_8px_rgba(0,0,0,0.5)]">
    <span className="ml-[4px] w-[28px] font-['Open_Sans',sans-serif] text-[12px] text-[#999]">G</span>
    <svg width="104" height="12" viewBox="0 0 104 12" fill="none" stroke="#888" className="mb-[2px]">
      <path d="M1.500 3.500h7v7h-7zM3.500 3.500v-2h7v7h-2M46.500 1.500h9v9h-9zM92 1l10 10M102 1l-10 10" />
    </svg>
  </div>
);

export default function App() {
  return (
    <div className="relative flex h-[734px] w-[1366px] flex-col overflow-hidden bg-[#dfe2ea] font-['Liberation_Sans',Arial,sans-serif] text-black">
      <Defs />
      <Header />
      <CommandArea />
      <Tabs />
      <MainToolbar />
      <div className="flex h-[551px] shrink-0">
        <SideToolbar />
        <div className="w-[1253px] shrink-0">
          <Viewport />
          <ViewTabs />
        </div>
        <RightPanel />
      </div>
      <StatusBar />
      <div className="flex h-[6px] bg-[#080a06]">
        <div className="ml-[48px] h-full w-[344px] bg-[#333]" />
        <div className="ml-[393px] h-full w-[48px] bg-[#33352f]" />
      </div>
      <FloatingWindow />
    </div>
  );
}
